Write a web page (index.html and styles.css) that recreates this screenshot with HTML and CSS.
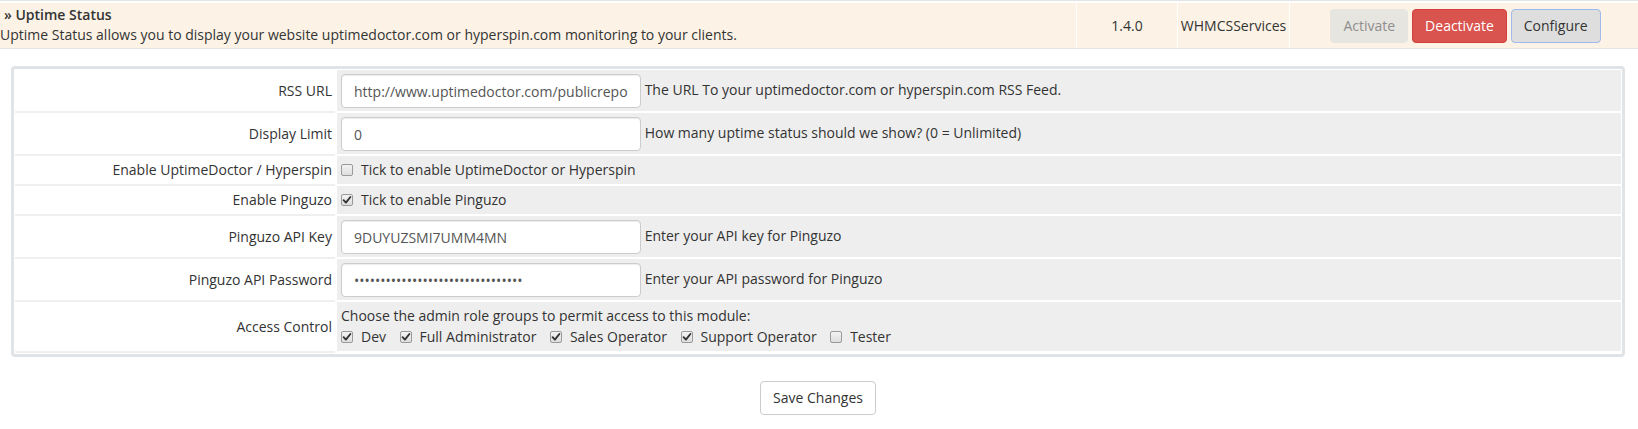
FILE: index.html
```html
<!DOCTYPE html>
<html lang="en">
<head>
<meta charset="utf-8">
<title>Uptime Status module</title>
<link rel="stylesheet" href="styles.css">
</head>
<body>
<div class="modrow">
  <div class="cell c-info">
    <div class="info">
      <div class="title">&raquo; Uptime Status</div>
      <div class="desc">Uptime Status allows you to display your website uptimedoctor.com or hyperspin.com monitoring to your clients.</div>
    </div>
  </div>
  <div class="cell c-ver">1.4.0</div>
  <div class="cell c-auth">WHMCSServices</div>
  <div class="cell c-act">
    <button class="btn btn-disabled" type="button">Activate</button>
    <button class="btn btn-danger" type="button">Deactivate</button>
    <button class="btn btn-config" type="button">Configure</button>
  </div>
</div>

<div class="panel">
  <table class="form">
    <tr>
      <td class="fl">RSS URL</td>
      <td class="fa"><input class="inp" type="text" value="http://www.uptimedoctor.com/publicreports/rss"> The URL To your uptimedoctor.com or hyperspin.com RSS Feed.</td>
    </tr>
    <tr>
      <td class="fl">Display Limit</td>
      <td class="fa"><input class="inp" type="text" value="0"> How many uptime status should we show? (0 = Unlimited)</td>
    </tr>
    <tr>
      <td class="fl">Enable UptimeDoctor / Hyperspin</td>
      <td class="fa cbrow"><span class="cb"></span>Tick to enable UptimeDoctor or Hyperspin</td>
    </tr>
    <tr>
      <td class="fl">Enable Pinguzo</td>
      <td class="fa cbrow"><span class="cb on"><svg viewBox="0 0 12 12"><path d="M2.6 6.2 L4.9 8.6 L9.4 3" /></svg></span>Tick to enable Pinguzo</td>
    </tr>
    <tr>
      <td class="fl">Pinguzo API Key</td>
      <td class="fa"><input class="inp" type="text" value="9DUYUZSMI7UMM4MN"> Enter your API key for Pinguzo</td>
    </tr>
    <tr>
      <td class="fl">Pinguzo API Password</td>
      <td class="fa"><input class="inp" type="password" value="abcdefghijklmnopqrstuvwxyzabcdef"> Enter your API password for Pinguzo</td>
    </tr>
    <tr>
      <td class="fl">Access Control</td>
      <td class="fa acc">
        <div class="acc-line">Choose the admin role groups to permit access to this module:</div>
        <div class="acc-opts">
          <span class="opt"><span class="cb on"><svg viewBox="0 0 12 12"><path d="M2.6 6.2 L4.9 8.6 L9.4 3" /></svg></span>Dev</span>
          <span class="opt"><span class="cb on"><svg viewBox="0 0 12 12"><path d="M2.6 6.2 L4.9 8.6 L9.4 3" /></svg></span>Full Administrator</span>
          <span class="opt"><span class="cb on"><svg viewBox="0 0 12 12"><path d="M2.6 6.2 L4.9 8.6 L9.4 3" /></svg></span>Sales Operator</span>
          <span class="opt"><span class="cb on"><svg viewBox="0 0 12 12"><path d="M2.6 6.2 L4.9 8.6 L9.4 3" /></svg></span>Support Operator</span>
          <span class="opt"><span class="cb"></span>Tester</span>
        </div>
      </td>
    </tr>
  </table>
</div>

<div class="save-wrap">
  <button class="btn btn-save" type="button">Save Changes</button>
</div>
</body>
</html>
```

FILE: styles.css
```css
* { box-sizing: border-box; }

html, body {
  margin: 0;
  padding: 0;
  background: #fff;
}

body {
  font-family: "Open Sans", "Liberation Sans", sans-serif;
  font-size: 14px;
  line-height: 20px;
  color: #333;
}

/* ---------- module row ---------- */
.modrow {
  display: flex;
  border-top: 1px solid #e4e4e4;
  border-bottom: 1px solid #e4e4e4;
  padding-top: 2px;
}

.cell {
  background: #fcf3e6;
  height: 45px;
  display: flex;
  align-items: center;
}

.c-info {
  width: 1076px;
  padding-bottom: 2px;
}

.info .title {
  font-weight: 600;
  padding-left: 4px;
}

.c-ver {
  width: 101px;
  border-left: 1px solid #fff;
  justify-content: center;
}

.c-auth {
  width: 112px;
  border-left: 1px solid #fff;
  justify-content: center;
}

.c-act {
  flex: 1;
  border-left: 1px solid #fff;
  justify-content: center;
  gap: 4px;
  padding-left: 3px;
}

.btn {
  font-family: inherit;
  font-size: 14px;
  line-height: 20px;
  padding: 6px 12px;
  height: 34px;
  border: 1px solid transparent;
  border-radius: 4px;
  cursor: pointer;
  white-space: nowrap;
}

.btn-disabled {
  background: #e7e5e0;
  border-color: #e7e5e0;
  color: #8e8e8e;
  cursor: not-allowed;
}

.btn-danger {
  background: #d9534f;
  border-color: #d43f3a;
  color: #fff;
}

.btn-config {
  background: #dedede;
  border-color: #9fbaec;
  color: #333;
}

/* ---------- config panel ---------- */
.panel {
  margin: 17px 13px 0 11px;
  border: 3px solid #e0e4e7;
  border-radius: 4px;
  padding: 1px;
  background: #fff;
}

.form {
  width: 100%;
  border-collapse: separate;
  border-spacing: 0;
}

.fl {
  width: 320px;
  text-align: right;
  vertical-align: middle;
  padding: 0 3px 0 4px;
  border-bottom: 2px solid #efefef;
  white-space: nowrap;
}

.fa {
  background: #eeeeee;
  border-left: 2px solid #fff;
  border-bottom: 2px solid #fff;
  padding: 4px 4px 3px;
  vertical-align: middle;
}

.fa.cbrow {
  padding: 4px 4px 4px;
}

.inp {
  width: 300px;
  height: 34px;
  padding: 6px 12px;
  font-family: inherit;
  font-size: 14px;
  line-height: 20px;
  color: #555;
  background: #fff;
  border: 1px solid #ccc;
  border-radius: 4px;
  box-shadow: inset 0 1px 1px rgba(0, 0, 0, .075);
  vertical-align: middle;
}

.cb {
  display: inline-block;
  width: 12px;
  height: 12px;
  border: 1px solid #9a9a9a;
  border-radius: 2px;
  background: linear-gradient(#f3f3f3, #dedede);
  vertical-align: -1px;
  margin-right: 8px;
  position: relative;
}

.cb svg {
  position: absolute;
  left: -1px;
  top: -1px;
  width: 12px;
  height: 12px;
}

.cb svg path {
  fill: none;
  stroke: #333;
  stroke-width: 1.9;
  stroke-linecap: round;
  stroke-linejoin: round;
}

.fa.acc {
  padding-top: 4px;
  padding-bottom: 3px;
}

.acc-opts {
  display: flex;
  align-items: center;
  height: 22px;
  gap: 13.5px;
}

.opt {
  display: inline-flex;
  align-items: center;
}

/* ---------- save ---------- */
.save-wrap {
  display: flex;
  justify-content: center;
  margin-top: 24px;
  padding-right: 2px;
}

.btn-save {
  background: #fff;
  border-color: #ccc;
  color: #333;
}
```
